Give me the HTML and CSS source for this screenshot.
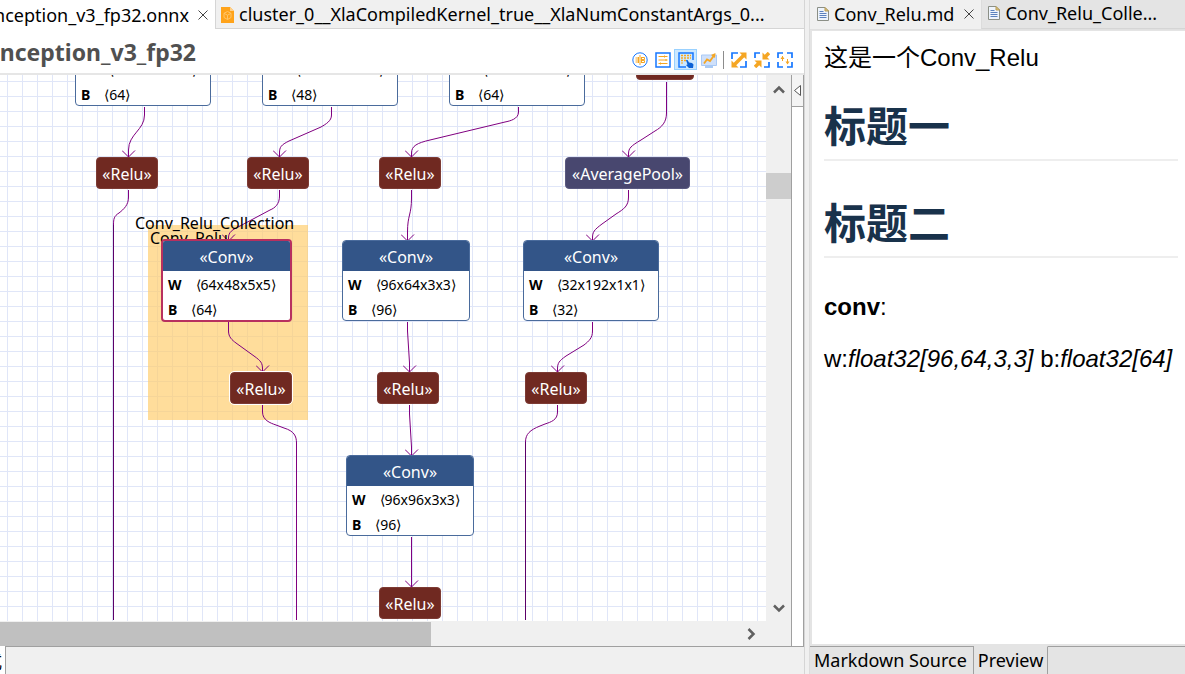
FILE: index.html
```html
<!DOCTYPE html>
<html lang="zh-CN">
<head>
<meta charset="utf-8">
<title>Inception_v3_fp32</title>
<link rel="stylesheet" href="styles.css">
</head>
<body>
<div class="workbench">
  <section class="editor">
    <div class="tabs">
      <div class="tab tab-model active"><span class="tab-name">inception_v3_fp32.onnx</span><button class="close" aria-label="Close"><svg viewBox="0 0 10 10"><path d="M0.500 0.500L9.500 9.500M9.500 0.500L0.500 9.500"/></svg></button></div>
      <div class="tab tab-cluster"><svg class="file-onnx" viewBox="0 0 13 17"><path d="M0 1H9L13 5V17H0Z" fill="#ffa31a"/><path d="M9 1L13 5H9Z" fill="#ffd08a"/><path d="M6.500 5.500L10 7.300V11.500L6.500 13.500L3 11.500V7.300ZM3 7.300L6.500 9.200L10 7.300M6.500 9.200V13.500" fill="none" stroke="#ffc569"/></svg><span>cluster_0__XlaCompiledKernel_true__XlaNumConstantArgs_0...</span></div>
    </div>
    <header class="title-bar">
      <h1 class="model-title">Inception_v3_fp32</h1>
      <div class="toolbar">
        <button class="tool" aria-label="Names"><svg viewBox="0 0 16 16"><circle cx="8" cy="8" r="7.200" fill="#fff" stroke="#1677ff"/><g stroke="#f5a623" fill="none"><path d="M8 3V13M3.500 6H6M3.500 8H7M3.500 10H6M6.500 5V11M9.500 5V11M10 5.500H12.500V7.500H10M10 8.500H12.500V10.500H10"/></g></svg></button>
        <button class="tool" aria-label="Properties"><svg viewBox="0 0 16 16"><rect x="1" y="1" width="14" height="14" fill="#fff" stroke="#1677ff" stroke-width="1.500"/><path d="M3.500 4.500H12.500M3.500 8H12.500M3.500 11.500H12.500M9.500 3.500V5.500M5.500 10.500V12.500M11 7V9" stroke="#f5a623"/></svg></button>
        <button class="tool selected" aria-label="Select group"><svg viewBox="0 0 16 16"><path d="M15 8V1H1V15H8" fill="none" stroke="#1677ff" stroke-width="1.500"/><path d="M3 3.500H13M3 6H13M3 8.500H8" stroke="#f5a623" stroke-width="1.500" stroke-dasharray="2 1"/><path d="M3 11H5" stroke="#f5a623"/><path d="M8 8L9.500 8L11 10.500L14 11L15.500 12.500L15 16H11L8 13L9.500 12.500Z" fill="#0b62d6"/></svg></button>
        <button class="tool" aria-label="Profile"><svg viewBox="0 0 16 16"><path d="M0.500 3H15.500V13.500H0.500Z" fill="#cfe0fa" stroke="#a9c9f5"/><path d="M4 15H12" stroke="#8eb8f0" stroke-width="1.500"/><path d="M3 11.500L6 7.500L9 9L13 3.500" fill="none" stroke="#f5a623" stroke-width="1.800"/><path d="M10 3L14.500 1L14 6Z" fill="#f5a623"/></svg></button>
        <span class="divider"></span>
        <button class="tool" aria-label="Expand"><svg viewBox="0 0 16 16"><path d="M1 7V1H7M9 15H15V9" fill="none" stroke="#1677ff" stroke-width="1.700"/><path d="M3 13L13 3" stroke="#f5a623" stroke-width="3.500"/><path d="M8.500 0.500H15.500V7.500ZM0.500 8.500V15.500H7.500Z" fill="#f5a623"/></svg></button>
        <button class="tool" aria-label="Collapse"><svg viewBox="0 0 16 16"><path d="M1 6V1H6M10 15H15V10" fill="none" stroke="#1677ff" stroke-width="1.700"/><path d="M1 15L5 11M15 1L11 5" stroke="#f5a623" stroke-width="3.500"/><path d="M8.500 0.500V7.500H15.500ZM7.500 15.500V8.500H0.500Z" fill="#f5a623"/></svg></button>
        <button class="tool" aria-label="Fit"><svg viewBox="0 0 16 16"><path d="M1 6V1H6M10 1H15V6M15 10V15H10M6 15H1V10" fill="none" stroke="#1677ff" stroke-width="1.700"/><path d="M5.500 4V9M10.500 7V12" stroke="#f5a623"/><path d="M3.500 7L5.500 4L7.500 7ZM8.500 9.500L10.500 12.500L12.500 9.500Z" fill="#f5a623"/></svg></button>
      </div>
    </header>
    <div class="graph">
      <div class="canvas">
        <span class="group-label label-collection">Conv_Relu_Collection</span>
        <span class="group-label label-pair">Conv_Relu</span>
        <div class="group"></div>
        <svg class="edges">
          <defs>
            <marker id="arrow" viewBox="0 0 14 8" refX="7" refY="7" markerWidth="14" markerHeight="8" markerUnits="userSpaceOnUse"><path d="M0.500 0.500L7 7L13.500 0.500"/></marker>
          </defs>
          <g transform="translate(0 -75)">
            <path class="arrow" d="M144.500 107V115C144.500 130 128.500 134 128.500 150V157"/>
            <path class="arrow" d="M331.500 107V115C331.500 121 326 124 321 127L289 141C281 145 279.500 147 279.500 153V157"/>
            <path class="arrow" d="M518.500 107V112C518.500 119 510 121 505 122L430 140C417 143 411.500 146 411.500 153V157"/>
            <path class="arrow" d="M666.500 82V113C666.500 122 662 127 655 131L641 140C631 146 628.500 148 628.500 154V157"/>
            <path class="arrow" d="M279.500 190V196C279.500 204 275 208 270 210L240 226C232 230 228.500 232 228.500 238V241"/>
            <path class="arrow" d="M411.500 190V198C411.500 215 407.500 215 407.500 232V241"/>
            <path class="arrow" d="M628.500 190V197C628.500 206 624 209 616 214L602 224C594 230 592.500 232 592.500 238V241"/>
            <path class="arrow" d="M228.500 322V331C228.500 337 232 340 236 343L254 356C261 361 262.500 363 262.500 369V372"/>
            <path class="arrow" d="M407.500 322V331L409.500 363V372"/>
            <path class="arrow" d="M592.500 322V331C592.500 338 589 341 584 345L566 356C559 361 557.500 363 557.500 369V372"/>
            <path class="arrow" d="M409.500 405V414L411.500 447V456"/>
            <path class="arrow" d="M411.500 537V587"/>
            <path d="M128.500 190V197C128.500 205 124 209 119 213C114 216 113.500 219 113.500 225"/>
            <path class="long" d="M113.500 225V620"/>
            <path d="M262.500 405V412C262.500 420 270 423 276 425L284 428C294 431 296.500 436 296.500 443V620"/>
            <path d="M557.500 405V412C557.500 420 551 422 545 424L540 426C530 430 525.500 434 525.500 442"/>
            <path class="long" d="M525.500 442V620"/>
          </g>
        </svg>

        <div class="node conv wide at-a1"><div class="param"><b>W</b>⟨64x192x1x1⟩</div><div class="param"><b>B</b>⟨64⟩</div></div>
        <div class="node conv wide at-a2"><div class="param"><b>W</b>⟨48x192x1x1⟩</div><div class="param"><b>B</b>⟨48⟩</div></div>
        <div class="node conv wide at-a3"><div class="param"><b>W</b>⟨64x192x1x1⟩</div><div class="param"><b>B</b>⟨64⟩</div></div>
        <div class="node relu at-a4"></div>
        <div class="node relu at-b1">«Relu»</div>
        <div class="node relu at-b2">«Relu»</div>
        <div class="node relu at-b3">«Relu»</div>
        <div class="node pool at-b4">«AveragePool»</div>
        <div class="node conv picked at-c1"><div class="op">«Conv»</div><div class="param"><b>W</b>⟨64x48x5x5⟩</div><div class="param"><b>B</b>⟨64⟩</div></div>
        <div class="node conv at-c2"><div class="op">«Conv»</div><div class="param"><b>W</b>⟨96x64x3x3⟩</div><div class="param"><b>B</b>⟨96⟩</div></div>
        <div class="node conv wide at-c3"><div class="op">«Conv»</div><div class="param"><b>W</b>⟨32x192x1x1⟩</div><div class="param"><b>B</b>⟨32⟩</div></div>
        <div class="node relu at-d1">«Relu»</div>
        <div class="node relu at-d2">«Relu»</div>
        <div class="node relu at-d3">«Relu»</div>
        <div class="node conv at-e1"><div class="op">«Conv»</div><div class="param"><b>W</b>⟨96x96x3x3⟩</div><div class="param"><b>B</b>⟨96⟩</div></div>
        <div class="node relu at-f1">«Relu»</div>
      </div>
      <div class="vscroll">
        <svg class="chevron" viewBox="0 0 12 12"><path d="M1 8.500L6 3.500L11 8.500"/></svg>
        <div class="vtrack"><div class="vthumb"></div></div>
        <svg class="chevron" viewBox="0 0 12 12"><path d="M1 3.500L6 8.500L11 3.500"/></svg>
      </div>
      <div class="hscroll"><div class="hthumb"></div><svg class="chevron" viewBox="0 0 12 12"><path d="M3.500 1L8.500 6L3.500 11"/></svg></div>
      <div class="palette"><button class="palette-toggle" aria-label="Show palette"><svg viewBox="0 0 7 11"><path d="M6.500 0.500V10.500L0.500 5.500Z"/></svg></button></div>
    </div>
    <div class="pages"><button class="page-tab">式</button><div class="pages-rest"></div></div>
  </section>

  <div class="sash"></div>

  <section class="notes">
    <div class="tabs note-tabs">
      <div class="tab tab-note active"><svg class="file-md" viewBox="0 0 12 14"><path d="M0.500 0.500H8L11.500 4V13.500H0.500Z" fill="#eef4fc" stroke="#8b8f86"/><path d="M8 0.500V4H11.500Z" fill="#e5c97f" stroke="#b59a56"/><path d="M2.500 4.500H6.500M2.500 6.500H9.500M2.500 8.500H9.500M2.500 10.500H9.500" stroke="#5d82bd"/></svg><span>Conv_Relu.md</span><button class="close" aria-label="Close"><svg viewBox="0 0 10 10"><path d="M0.500 0.500L9.500 9.500M9.500 0.500L0.500 9.500"/></svg></button></div>
      <div class="tab tab-other"><svg class="file-md" viewBox="0 0 12 14"><path d="M0.500 0.500H8L11.500 4V13.500H0.500Z" fill="#eef4fc" stroke="#8b8f86"/><path d="M8 0.500V4H11.500Z" fill="#e5c97f" stroke="#b59a56"/><path d="M2.500 4.500H6.500M2.500 6.500H9.500M2.500 8.500H9.500M2.500 10.500H9.500" stroke="#5d82bd"/></svg><span>Conv_Relu_Colle...</span></div>
    </div>
    <article class="preview">
      <p>这是一个Conv_Relu</p>
      <h2>标题一</h2>
      <h2>标题二</h2>
      <p class="lead"><strong>conv</strong>:</p>
      <p class="types">w:<em>float32[96,64,3,3]</em> b:<em>float32[64]</em></p>
    </article>
    <div class="modes"><button class="mode">Markdown Source</button><button class="mode current">Preview</button><div class="modes-rest"></div></div>
  </section>
</div>
</body>
</html>
```
FILE: styles.css
```css
* { box-sizing: border-box; }
body {
  margin: 0;
  font-family: "Noto Sans", "Noto Sans CJK SC", sans-serif;
  color: #000;
  background: #f0f0f0;
}
button {
  border: 0;
  padding: 0;
  background: none;
  font: inherit;
  color: inherit;
}
svg { display: block; flex: none; }

.workbench {
  display: grid;
  grid-template-columns: minmax(0, 805fr) 5px minmax(0, 375fr);
  height: 100vh;
  overflow: hidden;
}
.editor { display: flex; flex-direction: column; min-width: 0; background: #fff; border-right: 1px solid #d5d5d5; }
.sash { background: #f0f0f0; border-right: 1px solid #dcdcdc; }
.notes { display: flex; flex-direction: column; min-width: 0; background: #e4e4e4; }

/* Tabs */
.tabs { display: flex; flex: none; height: 29px; font-size: 18px; line-height: 28px; white-space: nowrap; }
.tab { display: flex; align-items: center; overflow: hidden; }
.tab-model { justify-content: flex-end; flex: none; width: 215px; padding-right: 7px; gap: 9px; background: #fff; }
.tab-name { flex: none; }
.tab-cluster { flex: 1; gap: 5px; padding-left: 5px; background: #f0f0f0; border-left: 1px solid #d5d5d5; border-bottom: 1px solid #d5d5d5; }
.close svg { width: 10px; height: 10px; fill: none; stroke: #444; }
.file-onnx { width: 13px; height: 17px; }
.file-md { width: 12px; height: 14px; }

/* Title */
.title-bar { display: flex; flex: none; height: 46px; justify-content: space-between; border-bottom: 2px solid #e6e6e6; }
.model-title { display: flex; justify-content: flex-end; flex: none; width: 196px; margin: 0; overflow: hidden; font-size: 23px; line-height: 46px; color: #505050; }
.toolbar { display: flex; align-items: center; padding: 15px 8px 0 0; height: 46px; }
.tool { display: flex; align-items: center; justify-content: center; width: 23px; height: 21px; }
.tool svg { width: 16px; height: 16px; }
.tool.selected { background: #cce8ff; border: 1px solid #99d1ff; }
.divider { width: 1px; height: 18px; margin: 0 3px; background: #8c8c8c; }

/* Graph */
.graph {
  flex: 1;
  min-height: 0;
  display: grid;
  grid-template-columns: minmax(0, 1fr) 25px 13px;
  grid-template-rows: minmax(0, 1fr) 25px;
}
.canvas {
  position: relative;
  overflow: hidden;
  background-color: #fff;
  background-image: linear-gradient(#e0e6f8 1px, transparent 1px), linear-gradient(90deg, #e0e6f8 1px, transparent 1px);
  background-size: 15px 15px;
  background-position: 7px 6px;
}
.edges { position: absolute; inset: 0; width: 100%; height: 100%; }
.edges path { fill: none; stroke: #800080; }
.edges .arrow { marker-end: url(#arrow); }
.edges .long { stroke: #5c0068; }
.group { position: absolute; left: 148px; top: 150px; width: 160px; height: 195px; background: rgba(255, 204, 103, 0.66); }
.group-label { position: absolute; font-size: 16px; line-height: 20px; z-index: 1; }
.label-collection { left: 135px; top: 138px; }
.label-pair { left: 150px; top: 153px; }

.node { position: absolute; z-index: 2; border-radius: 4px; font-size: 16px; line-height: 32px; text-align: center; white-space: nowrap; }
.relu, .pool { height: 32px; color: #fff; }
.relu { width: 62px; background: #702921; border: 1px solid #7d3b34; line-height: 32px; }
.pool { width: 125px; background: #48476f; border: 1px solid #5a5980; line-height: 32px; }
.conv { width: 128px; background: #fff; border: 1px solid #4a6b9c; overflow: hidden; }
.conv.wide { width: 136px; }
.conv.picked { width: 131px; border: 2px solid #b8305f; }
.op { height: 30px; line-height: 32px; background: #335588; color: #fff; }
.param { display: flex; gap: 14px; padding-left: 5px; height: 25px; line-height: 28px; font-size: 14px; }
.param:last-child { height: 24px; }

.at-a1 { left: 75px; top: -20px; }
.at-a2 { left: 262px; top: -20px; }
.at-a3 { left: 449px; top: -20px; }
.at-a4 { left: 636px; top: -27px; width: 58px; }
.at-b1 { left: 96px; top: 82px; }
.at-b2 { left: 247px; top: 82px; }
.at-b3 { left: 379px; top: 82px; }
.at-b4 { left: 565px; top: 82px; }
.at-c1 { left: 161px; top: 164px; }
.at-c2 { left: 342px; top: 165px; }
.at-c3 { left: 523px; top: 165px; }
.at-d1 { left: 230px; top: 297px; outline: 1px solid #fff; }
.at-d2 { left: 377px; top: 297px; }
.at-d3 { left: 525px; top: 297px; }
.at-e1 { left: 346px; top: 380px; }
.at-f1 { left: 379px; top: 512px; }

/* Scroll bars */
.vscroll { display: flex; flex-direction: column; align-items: center; padding: 9px 0 7px; background: #f0f0f0; }
.vtrack { flex: 1; width: 100%; padding-top: 77px; }
.vthumb { height: 26px; background: #cdcdcd; }
.chevron { width: 12px; height: 12px; fill: none; stroke: #606060; stroke-width: 2.5px; }
.hscroll { grid-column: 1 / 3; grid-row: 2; display: flex; align-items: center; justify-content: space-between; padding-right: 34px; background: #f0f0f0; }
.hthumb { width: 57%; height: 24px; background: #c0c0c0; }
.palette { grid-column: 3; grid-row: 1 / 3; background: #fff; border-left: 1px solid #a0a0a0; border-right: 1px solid #a0a0a0; }
.palette-toggle { display: flex; align-items: center; justify-content: center; width: 100%; height: 32px; background: #f4f4f4; border-bottom: 1px solid #a0a0a0; }
.palette-toggle svg { width: 7px; height: 11px; fill: #fff; stroke: #555; }

/* Page tabs */
.pages { display: flex; flex: none; height: 28px; background: #fff; }
.page-tab { display: flex; align-items: center; justify-content: flex-end; width: 5px; padding-right: 3px; overflow: hidden; font-size: 18px; }
.pages-rest { flex: 1; background: #f0f0f0; border-top: 1px solid #a0a0a0; border-left: 1px solid #a0a0a0; }

/* Notes */
.note-tabs { height: 30px; line-height: 26px; background: #e4e4e4; border-bottom: 1px solid #e0e0e0; }
.note-tabs .tab { padding-bottom: 2px; }
.tab-note { flex: none; gap: 5px; padding: 0 7px; background: #f0f0f0; }
.tab-note .close { margin-left: 5px; }
.tab-other { flex: 1; gap: 5px; padding-left: 6px; border-left: 1px solid #dcdcdc; border-bottom: 1px solid #d5d5d5; }
.preview {
  flex: 1;
  min-height: 0;
  margin: 1px 0 1px 2px;
  padding: 13px 7px 0 12px;
  background: #fff;
  font-family: "Liberation Sans", "Noto Sans CJK SC", sans-serif;
  font-size: 24px;
  line-height: 28px;
}
.preview p { margin: 0; white-space: nowrap; }
.preview h2 { margin: 31px 0 0; padding-bottom: 6px; border-bottom: 2px solid #eee; font-size: 42px; line-height: 50px; color: #19324b; }
.preview h2 + h2 { margin-top: 39px; }
.preview .lead { margin-top: 35px; }
.preview .types { margin-top: 24px; }
.modes { display: flex; flex: none; height: 29px; padding-top: 1px; font-size: 18px; line-height: 26px; }
.mode { padding: 0 6px 2px 4px; white-space: nowrap; border-top: 1px solid #a0a0a0; border-right: 1px solid #a0a0a0; }
.mode.current { padding-right: 4px; border-top-color: transparent; }
.modes-rest { flex: 1; border-top: 1px solid #a0a0a0; }
```
